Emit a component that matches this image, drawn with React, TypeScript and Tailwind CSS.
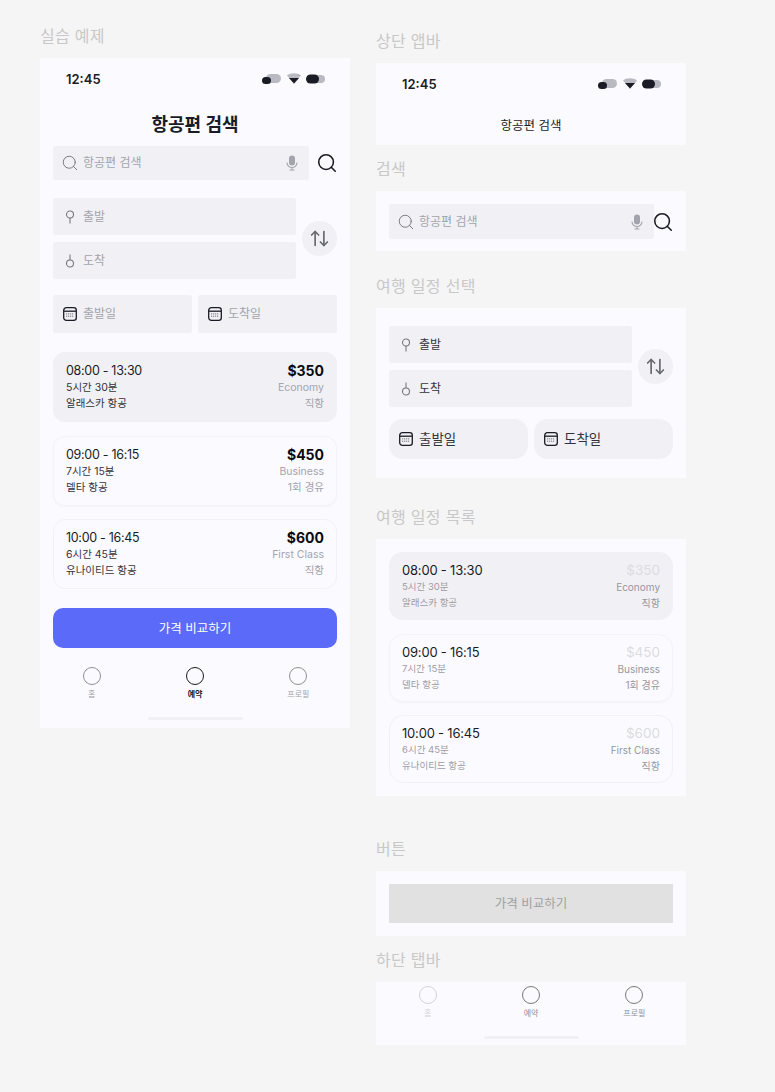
import { ArrowUpDown, Search } from 'lucide-react';

const font = { fontFamily: 'Inter, "Noto Sans CJK KR", sans-serif' };

const flights = [
  { time: '08:00 - 13:30', dur: '5시간 30분', air: '알래스카 항공', price: '$350', cls: 'Economy', stop: '직항', kind: 'on' },
  { time: '09:00 - 16:15', dur: '7시간 15분', air: '델타 항공', price: '$450', cls: 'Business', stop: '1회 경유', kind: 'shadow' },
  { time: '10:00 - 16:45', dur: '6시간 45분', air: '유나이티드 항공', price: '$600', cls: 'First Class', stop: '직항', kind: 'line' },
];

function SectionLabel({ children, className }: { children: string; className: string }) {
  return <div className={`text-[16px] leading-[20px] tracking-[0.3px] text-[#c8c8c8] ${className}`}>{children}</div>;
}

function StatusBar() {
  return (
    <div className="flex h-[20px] items-center justify-between pl-[26px] pr-[25px]">
      <span className="text-[13px] leading-[20px] font-semibold text-[#1a1b25]">12:45</span>
      <svg width="63" height="12" viewBox="0 0 63 12">
        <rect x="4" y="1" width="15" height="9" rx="4.5" fill="#b9b9c1" />
        <rect x="0" y="4" width="9" height="7" rx="3.5" fill="#1a1b25" />
        <path d="M25 2.5C28 -0.5 36 -0.5 39 2.5L32 11Z" fill="#b9b9c1" />
        <path d="M27 5h10L32 10.5Z" fill="#1a1b25" />
        <rect x="48" y="2" width="15" height="8" rx="4" fill="#b9b9c1" />
        <rect x="44" y="1.5" width="13" height="9" rx="4.5" fill="#1a1b25" />
      </svg>
    </div>
  );
}

function Mic() {
  return (
    <svg width="12" height="16" viewBox="0 0 12 16" fill="none">
      <rect x="3" y="0.5" width="6" height="10" rx="3" fill="#a3a3ab" />
      <path d="M1 7.5a5 5 0 0 0 10 0M6 12.5v2.5M3.5 15h5" stroke="#a3a3ab" strokeWidth="1.1" />
    </svg>
  );
}

function SearchRow({ wide }: { wide?: boolean }) {
  return (
    <div className="flex items-center">
      <div className={`flex shrink-0 items-center rounded-[2px] bg-[#f1f1f5] pl-[8px] pr-[11px] ${wide ? 'h-[35px] w-[265px]' : 'h-[34px] w-[256px]'}`}>
        <Search size={18} strokeWidth={1.3} className="shrink-0 text-[#77777f]" />
        <span className="ml-[4px] flex-1 text-[12px] text-[#a3a3ab]">항공편 검색</span>
        <Mic />
      </div>
      <Search size={22} strokeWidth={1.7} className={`shrink-0 text-[#1a1b25] ${wide ? 'ml-[-2px]' : 'ml-[7px]'}`} />
    </div>
  );
}

function PinIcon({ flip }: { flip?: boolean }) {
  return (
    <svg width="12" height="14" viewBox="0 0 12 14" fill="none" stroke="#77777f" strokeWidth="1.1">
      {flip ? (
        <>
          <circle cx="6" cy="9.5" r="3.5" />
          <path d="M6 6V0.5" />
        </>
      ) : (
        <>
          <circle cx="6" cy="4.5" r="3.5" />
          <path d="M6 8v5.5" />
        </>
      )}
    </svg>
  );
}

function CalendarIcon() {
  return (
    <svg width="14" height="14" viewBox="0 0 14 14" fill="none">
      <rect x="0.7" y="0.7" width="12.6" height="12.6" rx="2.6" stroke="#1a1b25" strokeWidth="1.3" />
      <path d="M1 4.2h12" stroke="#1a1b25" strokeWidth="1.3" />
      <path d="M3.2 6.9h7.6M3.2 9.2h7.6" stroke="#55555d" strokeWidth="1" strokeDasharray="1 1" />
    </svg>
  );
}

function RouteFields({ dark }: { dark?: boolean }) {
  const text = dark ? 'text-[#33333b]' : 'text-[#a3a3ab]';
  return (
    <div className="flex items-center">
      <div className="flex w-[243px] flex-col gap-[7px]">
        <div className="flex h-[37px] items-center rounded-[2px] bg-[#f1f1f5] pl-[11px]">
          <PinIcon />
          <span className={`ml-[7px] text-[12px] ${text}`}>출발</span>
        </div>
        <div className="flex h-[37px] items-center rounded-[2px] bg-[#f1f1f5] pl-[11px]">
          <PinIcon flip />
          <span className={`ml-[7px] text-[12px] ${text}`}>도착</span>
        </div>
      </div>
      <div className="ml-[6px] flex h-[35px] w-[35px] items-center justify-center rounded-full bg-[#f1f1f5]">
        <ArrowUpDown size={21} strokeWidth={1.9} className="text-[#66666e]" />
      </div>
    </div>
  );
}

function FlightList({ muted }: { muted?: boolean }) {
  return (
    <div className="flex flex-col gap-[13.5px]">
      {flights.map((f) => (
        <div
          key={f.time}
          className={`flex justify-between border px-[12px] pt-[9px] ${muted ? 'h-[68px] rounded-[14px]' : 'h-[70px] rounded-[12px]'} ${
            f.kind === 'on'
              ? 'border-transparent bg-[#f1f1f5]'
              : f.kind === 'shadow'
                ? 'border-[#f4f4f8] shadow-[0_1px_2px_rgba(30,30,60,0.04)]'
                : 'border-[#f2f2f6]'
          }`}
        >
          <div>
            <div className={`text-[#1a1b25] ${muted ? 'text-[13px] leading-[17px] tracking-[-0.2px]' : 'text-[12.5px] leading-[18px] tracking-[-0.3px]'}`}>{f.time}</div>
            <div className={`leading-[16px] ${muted ? 'text-[9.5px] text-[#9c9ca4]' : 'text-[10.5px] text-[#33333b]'}`}>{f.dur}</div>
            <div className={`leading-[16px] ${muted ? 'text-[9.5px] text-[#9c9ca4]' : 'text-[10.5px] text-[#33333b]'}`}>{f.air}</div>
          </div>
          <div className="text-right">
            <div className={muted ? 'text-[13.5px] leading-[17px] font-normal text-[#dcdce0]' : 'text-[14px] leading-[18px] font-bold text-[#0a0a10]'}>{f.price}</div>
            <div className={`leading-[16px] ${muted ? 'text-[10px] text-[#96969e]' : 'text-[10.5px] text-[#a3a3ab]'}`}>{f.cls}</div>
            <div className={`leading-[16px] ${muted ? 'text-[10px] text-[#96969e]' : 'text-[10.5px] text-[#a3a3ab]'}`}>{f.stop}</div>
          </div>
        </div>
      ))}
    </div>
  );
}

function TabBar({ colors }: { colors: { ring: string; text: string; bold?: boolean }[] }) {
  const tabs = ['홈', '예약', '프로필'];
  return (
    <div>
      <div className="grid grid-cols-3">
        {tabs.map((t, i) => (
          <div key={t} className="flex flex-col items-center">
            <div className={`h-[18px] w-[18px] rounded-full border-[1.7px] ${colors[i].ring}`} />
            <span className={`mt-[3px] text-[8px] leading-[12px] ${colors[i].text} ${colors[i].bold ? 'font-semibold' : ''}`}>{t}</span>
          </div>
        ))}
      </div>
      <div className="mx-auto mt-[17px] h-[3px] w-[95px] rounded-full bg-[#f1f1f5]" />
    </div>
  );
}

export default function App() {
  return (
    <div className="flex h-[1092px] w-[775px] items-start gap-[26px] overflow-hidden bg-[#f5f5f5] pl-[40px]" style={font}>
      {/* Practice example */}
      <div className="w-[310px]">
        <SectionLabel className="pt-[26px] pb-[12px]">실습 예제</SectionLabel>
        <div className="h-[670px] bg-[#fbfbff] pt-[11px]">
          <StatusBar />
          <h1 className="mt-[23px] text-center text-[18px] leading-[26px] font-bold text-[#1a1b25]">항공편 검색</h1>
          <div className="mx-[13px] mt-[8px]">
            <SearchRow />
          </div>
          <div className="mx-[13px] mt-[18px]">
            <RouteFields />
          </div>
          <div className="mx-[13px] mt-[16px] flex gap-[6px]">
            {['출발일', '도착일'].map((d) => (
              <div key={d} className="flex h-[38px] flex-1 items-center rounded-[2px] bg-[#f1f1f5] pl-[10px]">
                <CalendarIcon />
                <span className="ml-[6px] text-[12px] text-[#a3a3ab]">{d}</span>
              </div>
            ))}
          </div>
          <div className="mx-[13px] mt-[19px]">
            <FlightList />
          </div>
          <button className="mx-[13px] mt-[19px] block h-[40px] w-[284px] rounded-[10px] bg-[#5b6af8] pt-[2px] text-[12.5px] font-normal text-white">
            가격 비교하기
          </button>
          <div className="mt-[19px]">
            <TabBar
              colors={[
                { ring: 'border-[#8f8f97]', text: 'text-[#a3a3ab]' },
                { ring: 'border-[#1a1b25]', text: 'text-[#1a1b25]', bold: true },
                { ring: 'border-[#8f8f97]', text: 'text-[#a3a3ab]' },
              ]}
            />
          </div>
        </div>
      </div>

      {/* Component sheet */}
      <div className="w-[310px]">
        <SectionLabel className="pt-[31px] pb-[12px]">상단 앱바</SectionLabel>
        <div className="h-[82px] bg-[#fbfbff] pt-[11px]">
          <StatusBar />
          <div className="mt-[23px] text-center text-[12.5px] leading-[18px] text-[#1a1b25]">항공편 검색</div>
        </div>

        <SectionLabel className="pt-[14px] pb-[12px]">검색</SectionLabel>
        <div className="h-[60px] bg-[#fbfbff] px-[13px] pt-[13px]">
          <SearchRow wide />
        </div>

        <SectionLabel className="pt-[25px] pb-[12px]">여행 일정 선택</SectionLabel>
        <div className="h-[170px] bg-[#fbfbff] px-[13px] pt-[18px]">
          <RouteFields dark />
          <div className="mt-[12px] flex gap-[6px]">
            {['출발일', '도착일'].map((d) => (
              <div key={d} className="flex h-[40px] flex-1 items-center rounded-[14px] bg-[#f1f1f5] pl-[10px]">
                <CalendarIcon />
                <span className="ml-[6px] text-[13.5px] text-[#33333b]">{d}</span>
              </div>
            ))}
          </div>
        </div>

        <SectionLabel className="pt-[29px] pb-[12px]">여행 일정 목록</SectionLabel>
        <div className="h-[257px] bg-[#fbfbff] px-[13px] pt-[13px]">
          <FlightList muted />
        </div>

        <SectionLabel className="pt-[43px] pb-[12px]">버튼</SectionLabel>
        <div className="h-[65px] bg-[#fbfbff] px-[13px] pt-[13px]">
          <div className="flex h-[39px] items-center justify-center bg-[#e1e1e1] pt-[1px] text-[12.5px] text-[#a0a0a0]">가격 비교하기</div>
        </div>

        <SectionLabel className="pt-[14px] pb-[12px]">하단 탭바</SectionLabel>
        <div className="h-[63px] bg-[#fbfbff] pt-[4px]">
          <TabBar
            colors={[
              { ring: 'border-[#d4d4d8]', text: 'text-[#d4d4d8]' },
              { ring: 'border-[#77777f]', text: 'text-[#8f8f97]' },
              { ring: 'border-[#77777f]', text: 'text-[#8f8f97]' },
            ]}
          />
        </div>
      </div>
    </div>
  );
}
